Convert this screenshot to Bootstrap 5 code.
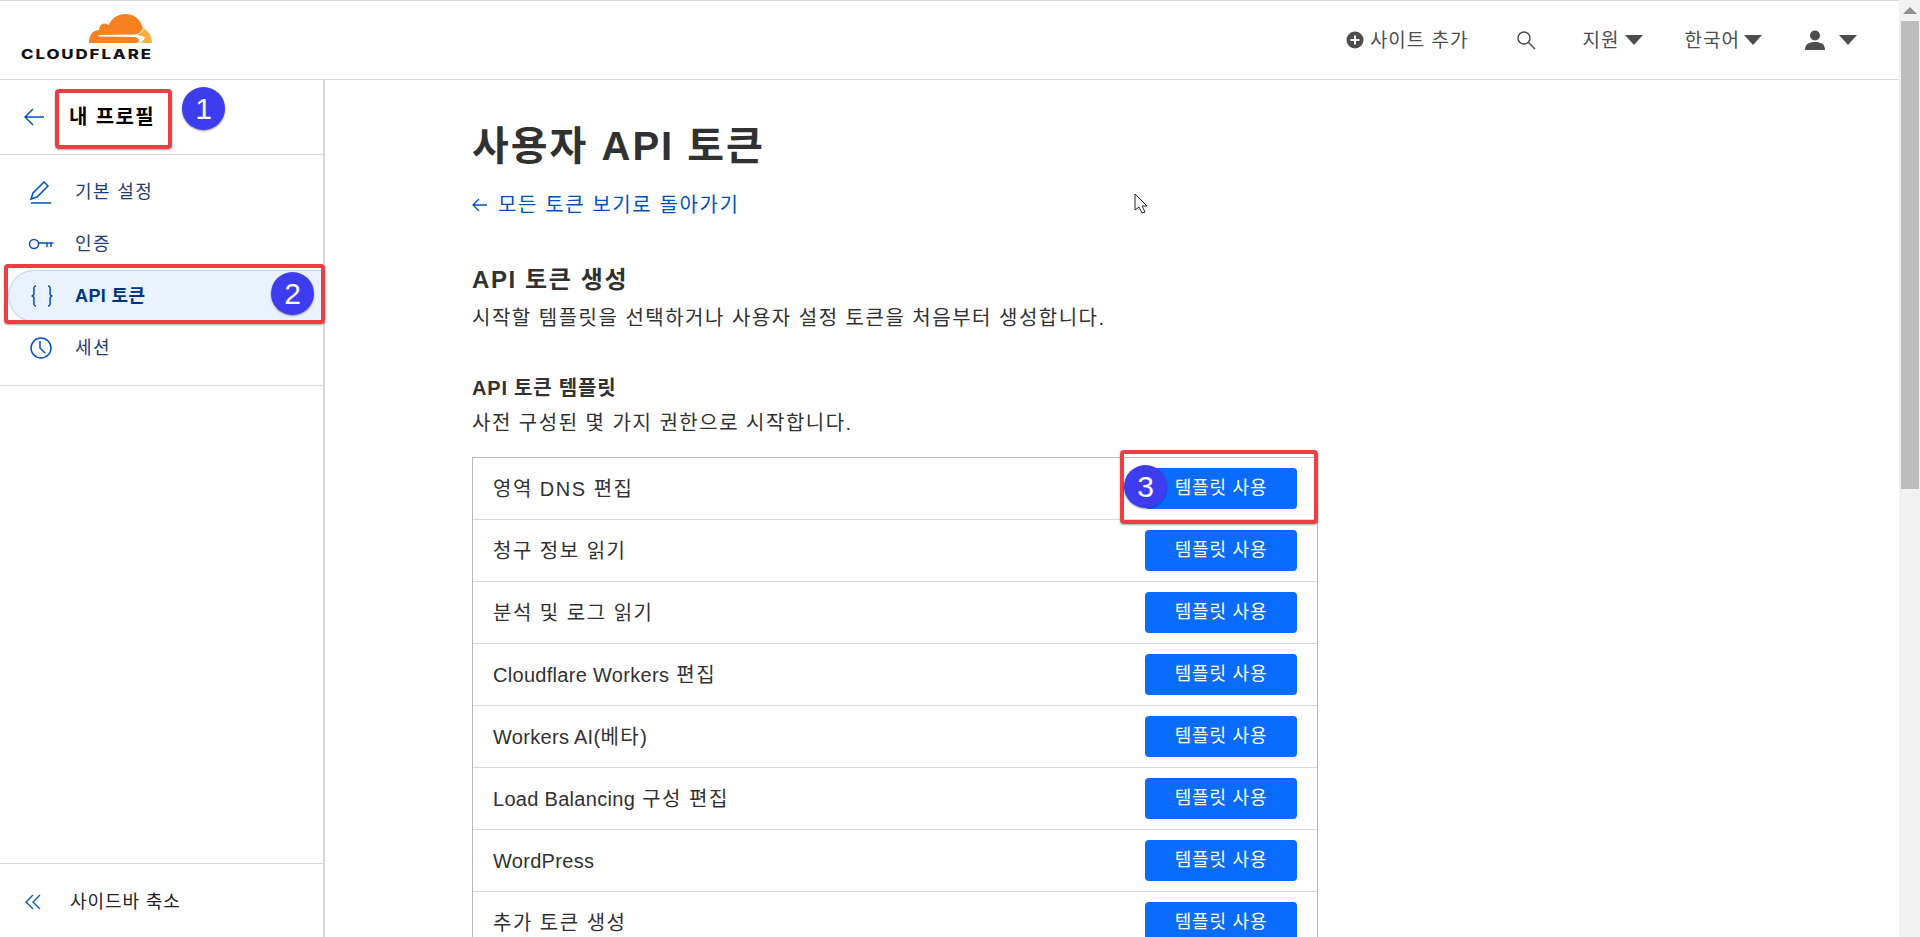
<!DOCTYPE html>
<html lang="ko">
<head>
    <meta charset="UTF-8">
    <title>사용자 API 토큰 | Cloudflare</title>
    <link href="https://cdn.jsdelivr.net/npm/bootstrap@5.3.0/dist/css/bootstrap.min.css" rel="stylesheet">
    <style>
        html, body { height: 937px; overflow: hidden; }
        body { font-family: "Liberation Sans", "Noto Sans CJK KR", sans-serif; color: #313131; background: #fff; position: relative; }
        .shell { height: 937px; }
        .page-col { width: 1899px; height: 937px; }
        .top-bar { height: 80px; border-top: 1px solid #d9d9d9; border-bottom: 1px solid #d9d9d9; padding: 0 42px 0 21px; }
        .brand-logo { width: 132px; height: 50px; margin-top: 11px; }
        .brand-name { font: 800 13px Inter, "Liberation Sans", sans-serif; letter-spacing: 1.5px; fill: #111; }
        .top-item { font-size: 19px; letter-spacing: 1px; color: #4d4d4d; line-height: 1; }
        .down-caret { width: 18px; height: 10px; margin-left: 5px; }
        .under-bar { height: 857px; }
        .side-col { width: 325px; border-right: 2px solid #d9d9d9; }
        .side-head { height: 75px; border-bottom: 1px solid #d9d9d9; padding-left: 24px; gap: 25px; font-size: 20px; letter-spacing: 1.4px; font-weight: 700; color: #000; }
        .side-nav { padding: 11px 0; border-bottom: 1px solid #d9d9d9; }
        .side-link { height: 52px; padding-left: 28px; gap: 21px; color: #1f3d72; font-size: 18px; letter-spacing: 1.4px; text-decoration: none; }
        .side-link.current { margin-left: 8px; padding-left: 20px; gap: 20px; border: 1px solid #bcd6fb; border-right: 0; border-radius: 26px 0 0 26px; background: #e9f2fe; color: #003681; font-weight: 700; letter-spacing: .4px; }
        .side-icon { width: 26px; height: 26px; flex: none; }
        .side-foot { height: 74px; border-top: 1px solid #d9d9d9; padding: 3px 0 0 24px; gap: 26px; font-size: 18px; letter-spacing: .9px; color: #222; }
        .main-col { padding: 39px 0 0 147px; }
        .page-title { font-size: 40px; font-weight: 600; letter-spacing: 2px; margin: 0; line-height: 54px; color: #313131; }
        .back-link { color: #0051c3; font-size: 20px; letter-spacing: 1.6px; text-decoration: none; margin-top: 19px; line-height: 26px; gap: 11px; }
        .sect-title { font-size: 24px; font-weight: 600; letter-spacing: 1.6px; margin: 47px 0 0; line-height: 30px; }
        .sect-sub { font-size: 20px; letter-spacing: 1.5px; margin: 10px 0 0; line-height: 26px; }
        .tmpl-title { font-size: 20px; font-weight: 600; letter-spacing: .8px; margin: 45px 0 0; line-height: 24px; }
        .tmpl-box { width: 846px; margin-top: 21px; border: 1px solid #b9b9b9; border-bottom: 0; }
        .tmpl-row { height: 62px; border-bottom: 1px solid #d9d9d9; padding: 0 20px 0 20px; font-size: 20px; letter-spacing: 1.5px; }
        .latin-run { letter-spacing: .3px; }
        .btn-tmpl { width: 152px; height: 41px; padding: 0; background: #0a6cff; border: 0; border-radius: 4px; color: #fff; font-size: 18px; letter-spacing: .8px; }
        .scroll-rail { width: 21px; background: #f1f1f1; }
        .scroll-up { height: 21px; }
        .scroll-thumb { height: 468px; margin: 0 1px 0 2px; background: #bdbdbd; }
        .note-box { position: absolute; border: 4px solid #ef3e42; border-radius: 4px; box-shadow: 0 1px 2px rgba(0,0,0,.35); }
        .note-num { position: absolute; width: 43px; height: 43px; border-radius: 50%; background: #3d3def; color: #fff; font: 30px/43px "Liberation Sans", sans-serif; text-align: center; box-shadow: 0 1px 2px rgba(0,0,0,.4); }
        .box-a { left: 55px; top: 89px; width: 117px; height: 60px; }
        .box-b { left: 4px; top: 264px; width: 321px; height: 60px; }
        .box-c { left: 1120px; top: 450px; width: 198px; height: 74px; }
        .num-a { left: 182px; top: 87px; }
        .num-b { left: 271px; top: 272px; }
        .num-c { left: 1124px; top: 465px; }
        .mouse-arrow { position: absolute; left: 1134px; top: 193px; width: 14px; height: 22px; }
    </style>
</head>
<body>
<div class="shell d-flex">
    <div class="page-col d-flex flex-column">
        <header class="top-bar d-flex align-items-start justify-content-between">
            <svg class="brand-logo" viewBox="0 0 132 50">
                <path fill="#f6821f" d="M68 31 H115 C118 31 118 29 118 28 C117 26 115 25 113 25 L78 24.500 C77 24.500 77 23 78 23 L114 22.500 C118 22 121 19 122 16 C119 6 112 2 104 2 C96 2 90 7 88 13 C85 11 82 11 80 13 C78 15 78 17 78 18 C72 18 68 23 68 31 Z"/>
                <path fill="#fbad41" d="M120 31 H131 C131 23 126 16 119 16 L123 16 C122 19 120 21 116 23 L124 25 C123 28 121 30 120 31 Z"/>
                <text class="brand-name" x="0" y="47" textLength="132" lengthAdjust="spacingAndGlyphs">CLOUDFLARE</text>
            </svg>
            <nav class="d-flex align-items-center top-item align-self-center">
                <svg width="18" height="18" viewBox="0 0 18 18" style="margin-right:6px"><circle cx="9" cy="9" r="8.500" fill="#4d4d4d"/><path d="M9 4.500v9M4.500 9h9" stroke="#fff" stroke-width="2"/></svg>
                <span>사이트 추가</span>
                <svg width="20" height="20" viewBox="0 0 20 20" style="margin-left:47px" fill="none" stroke="#4d4d4d" stroke-width="1.500"><circle cx="8" cy="8" r="6"/><path d="M12.500 12.500 19 19"/></svg>
                <span style="margin-left:47px">지원</span>
                <svg class="down-caret" viewBox="0 0 18 10"><path d="M0 0h18L9 10z" fill="#4d4d4d"/></svg>
                <span style="margin-left:42px">한국어</span>
                <svg class="down-caret" viewBox="0 0 18 10" style="margin-left:4px"><path d="M0 0h18L9 10z" fill="#4d4d4d"/></svg>
                <svg width="20" height="20" viewBox="0 0 20 20" style="margin-left:43px"><circle cx="10" cy="5.500" r="5" fill="#4d4d4d"/><path d="M0 20c0-6 4-8 10-8s10 2 10 8z" fill="#4d4d4d"/></svg>
                <svg class="down-caret" viewBox="0 0 18 10" style="margin-left:14px"><path d="M0 0h18L9 10z" fill="#4d4d4d"/></svg>
            </nav>
        </header>
        <div class="under-bar d-flex">
            <aside class="side-col d-flex flex-column">
                <div class="side-head d-flex align-items-center">
                    <svg width="20" height="18" viewBox="0 0 20 18" fill="none" stroke="#0051c3" stroke-width="1.500"><path d="M20 9H1M9 1 1 9l8 8"/></svg>
                    <span>내 프로필</span>
                </div>
                <nav class="side-nav d-flex flex-column">
                    <a class="side-link d-flex align-items-center" href="#">
                        <svg class="side-icon" viewBox="0 0 26 26" fill="none" stroke="#0051c3" stroke-width="1.500"><path d="M3 20 5 14 16 3l4 4L9 18zM3 24h20"/></svg>
                        <span>기본 설정</span>
                    </a>
                    <a class="side-link d-flex align-items-center" href="#">
                        <svg class="side-icon" viewBox="0 0 26 26" fill="none" stroke="#0051c3" stroke-width="1.500"><circle cx="6" cy="13" r="4.500"/><path d="M10.500 12h15M19 12v4M23 12v4"/></svg>
                        <span>인증</span>
                    </a>
                    <a class="side-link current d-flex align-items-center" href="#">
                        <svg class="side-icon" viewBox="0 0 26 26" fill="none" stroke="#0051c3" stroke-width="1.500"><path d="M7 3C4 3 5 7 5 10c0 2-1 3-2.500 3C4 13 5 14 5 16c0 3-1 7 2 7M19 3c3 0 2 4 2 7 0 2 1 3 2.500 3-1.500 0-2.500 1-2.500 3 0 3 1 7-2 7"/></svg>
                        <span>API 토큰</span>
                    </a>
                    <a class="side-link d-flex align-items-center" href="#">
                        <svg class="side-icon" viewBox="0 0 26 26" fill="none" stroke="#0051c3" stroke-width="1.500"><circle cx="13" cy="13" r="10"/><path d="M12 6v7l5 5"/></svg>
                        <span>세션</span>
                    </a>
                </nav>
                <div class="side-foot d-flex align-items-center mt-auto">
                    <svg width="20" height="16" viewBox="0 0 20 16" fill="none" stroke="#0051c3" stroke-width="1.300"><path d="M9 1 2 8l7 7M16 1 9 8l7 7"/></svg>
                    <span>사이드바 축소</span>
                </div>
            </aside>
            <main class="main-col flex-grow-1">
                <h1 class="page-title">사용자 API 토큰</h1>
                <a class="back-link d-flex align-items-center" href="#">
                    <svg width="15" height="14" viewBox="0 0 15 14" fill="none" stroke="#0051c3" stroke-width="1.300"><path d="M15 7H1M7 1 1 7l6 6"/></svg>
                    <span>모든 토큰 보기로 돌아가기</span>
                </a>
                <h2 class="sect-title">API 토큰 생성</h2>
                <p class="sect-sub">시작할 템플릿을 선택하거나 사용자 설정 토큰을 처음부터 생성합니다.</p>
                <h3 class="tmpl-title">API 토큰 템플릿</h3>
                <p class="sect-sub">사전 구성된 몇 가지 권한으로 시작합니다.</p>
                <div class="tmpl-box">
                    <div class="tmpl-row d-flex align-items-center justify-content-between"><span>영역 DNS 편집</span><button class="btn btn-tmpl">템플릿 사용</button></div>
                    <div class="tmpl-row d-flex align-items-center justify-content-between"><span>청구 정보 읽기</span><button class="btn btn-tmpl">템플릿 사용</button></div>
                    <div class="tmpl-row d-flex align-items-center justify-content-between"><span>분석 및 로그 읽기</span><button class="btn btn-tmpl">템플릿 사용</button></div>
                    <div class="tmpl-row d-flex align-items-center justify-content-between"><span><span class="latin-run">Cloudflare Workers</span> 편집</span><button class="btn btn-tmpl">템플릿 사용</button></div>
                    <div class="tmpl-row d-flex align-items-center justify-content-between"><span><span class="latin-run">Workers AI(</span>베타)</span><button class="btn btn-tmpl">템플릿 사용</button></div>
                    <div class="tmpl-row d-flex align-items-center justify-content-between"><span><span class="latin-run">Load Balancing</span> 구성 편집</span><button class="btn btn-tmpl">템플릿 사용</button></div>
                    <div class="tmpl-row d-flex align-items-center justify-content-between"><span class="latin-run">WordPress</span><button class="btn btn-tmpl">템플릿 사용</button></div>
                    <div class="tmpl-row d-flex align-items-center justify-content-between"><span>추가 토큰 생성</span><button class="btn btn-tmpl">템플릿 사용</button></div>
                </div>
            </main>
        </div>
    </div>
    <div class="scroll-rail">
        <div class="scroll-up d-flex align-items-center justify-content-center">
            <svg width="14" height="7" viewBox="0 0 14 7"><path d="M7 0l7 7H0z" fill="#8f8f8f"/></svg>
        </div>
        <div class="scroll-thumb"></div>
    </div>
</div>
<div class="note-box box-a"></div>
<div class="note-box box-b"></div>
<div class="note-box box-c"></div>
<div class="note-num num-a">1</div>
<div class="note-num num-b">2</div>
<div class="note-num num-c">3</div>
<svg class="mouse-arrow" viewBox="0 0 14 22"><path d="M1 1v16l4-3 3 6 3-1-3-6h5z" fill="#fff" stroke="#222" stroke-width="1"/></svg>
<script src="https://cdn.jsdelivr.net/npm/bootstrap@5.3.0/dist/js/bootstrap.bundle.min.js"></script>
</body>
</html>
